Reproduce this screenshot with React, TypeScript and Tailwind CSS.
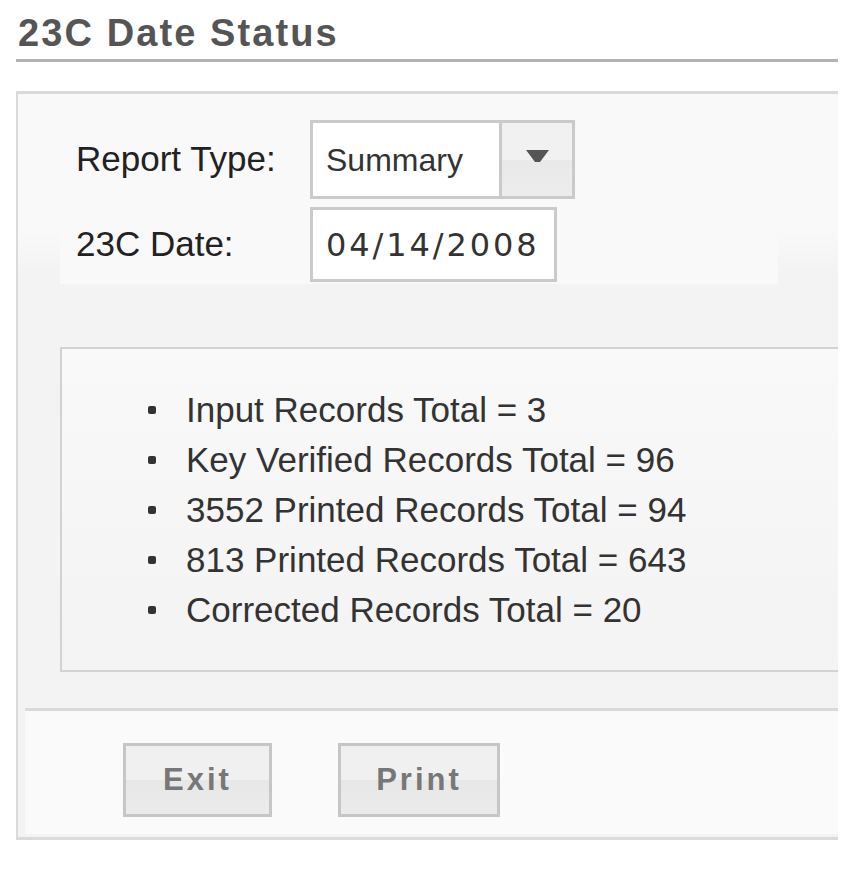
import React from "react";

const items = [
  "Input Records Total = 3",
  "Key Verified Records Total = 96",
  "3552 Printed Records Total = 94",
  "813 Printed Records Total = 643",
  "Corrected Records Total = 20",
];

export default function App() {
  return (
    <div className="w-[853px] h-[869px] bg-white overflow-hidden font-['Liberation_Sans',Arial,sans-serif]">
      <div className="w-[838px]">
        <h1 className="pl-[18px] pt-[11px] text-[38px] leading-[44px] font-bold tracking-[2.1px] text-[#555555]">
          23C Date Status
        </h1>
        <div className="ml-[16px] mt-[4px] h-[3px] bg-[#b3b3b3]" />

        <div className="ml-[16px] mt-[29px] border-t-[3px] border-l-[2px] border-b-[3px] border-[#dadada] pb-[3px] bg-[linear-gradient(to_bottom,#f9f9f9_135px,#f3f3f3_180px)]">
          {/* form area */}
          <div className="ml-[42px] w-[718px] bg-[#f9f9f9] pt-[26px] pb-[2px] flex flex-col gap-[8px]">
            <div className="flex items-center">
              <div className="w-[250px] pl-[16px] text-[35px] text-[#222222]">Report Type:</div>
              <div className="flex h-[79px] w-[265px] border-[3px] border-[#cacaca] bg-white">
                <div className="flex-1 flex items-center pl-[13px] text-[32px] text-[#333333]">Summary</div>
                <div className="w-[73px] border-l-[3px] border-[#cacaca] flex items-center justify-center bg-[linear-gradient(to_bottom,#f1f1f1_50%,#e9e9e9_50%,#ececec)]">
                  <svg width="23" height="13" viewBox="0 0 23 13" className="-mt-[6px]">
                    <polygon points="0,0 23,0 14,12 9,12" fill="#555555" />
                  </svg>
                </div>
              </div>
            </div>
            <div className="flex items-center">
              <div className="w-[250px] pl-[16px] text-[35px] text-[#222222]">23C Date:</div>
              <div className="flex items-center h-[75px] w-[247px] border-[3px] border-[#cacaca] bg-white pl-[13px] font-['DejaVu_Sans',sans-serif] text-[32px] tracking-[2.9px] text-[#333333]">
                04/14/2008
              </div>
            </div>
          </div>

          {/* results */}
          <div className="ml-[42px] mt-[63px] h-[325px] border-t-[2px] border-l-[2px] border-b-[2px] border-[#d2d2d2] bg-[linear-gradient(to_bottom,#f9f9f9,#f3f3f3)] pt-[36px]">
            <ul className="flex flex-col">
              {items.map((t) => (
                <li key={t} className="flex items-center h-[50px] text-[35px] text-[#333333]">
                  <span className="ml-[86px] w-[8px] h-[8px] rounded-[2px] bg-[#333333]" />
                  <span className="ml-[30px]">{t}</span>
                </li>
              ))}
            </ul>
          </div>

          {/* footer */}
          <div className="ml-[7px] mt-[36px] border-t-[3px] border-[#d9d9d9] bg-[#fafafa] pt-[32px] pb-[17px] flex">
            <button className="ml-[98px] w-[149px] h-[74px] border-[3px] border-[#c6c6c6] bg-[linear-gradient(to_bottom,#f0f0f0_50%,#e7e7e7_50%,#ebebeb)] text-[31px] font-bold tracking-[3px] text-[#777777] flex items-center justify-center">
              Exit
            </button>
            <button className="ml-[66px] w-[162px] h-[74px] border-[3px] border-[#c6c6c6] bg-[linear-gradient(to_bottom,#f0f0f0_50%,#e7e7e7_50%,#ebebeb)] text-[31px] font-bold tracking-[3px] text-[#777777] flex items-center justify-center">
              Print
            </button>
          </div>
        </div>
      </div>
    </div>
  );
}
